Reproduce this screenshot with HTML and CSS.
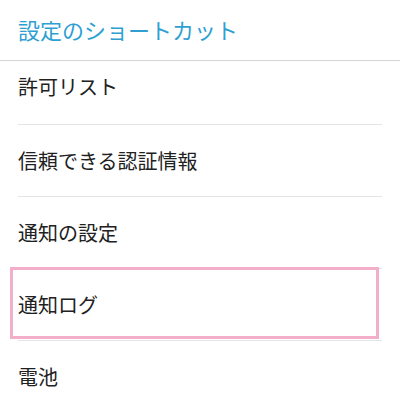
FILE: index.html
```html
<!DOCTYPE html>
<html lang="ja">
<head>
<meta charset="utf-8">
<link rel="stylesheet" href="styles.css">
</head>
<body>
<div class="screen">
  <div class="header">設定のショートカット</div>
  <div class="item item-first">許可リスト</div>
  <div class="item">信頼できる認証情報</div>
  <div class="item">通知の設定</div>
  <div class="item">通知ログ</div>
  <div class="item">電池</div>
  <div class="highlight"></div>
</div>
</body>
</html>
```
FILE: styles.css
```css
* { box-sizing: border-box; }
html, body {
  margin: 0;
  padding: 0;
  background: #ffffff;
}
.screen {
  position: relative;
  width: 400px;
  height: 409px;
  overflow: hidden;
  font-family: "Noto Sans CJK JP", "Noto Sans", sans-serif;
}
.header {
  height: 61px;
  padding: 18px 0 0 18px;
  font-size: 22px;
  line-height: 22px;
  color: #2f9fd2;
  border-bottom: 1px solid #d4d4d4;
}
.item {
  display: flex;
  align-items: center;
  height: 72px;
  margin: 0 18px;
  font-size: 20px;
  line-height: 20px;
  color: #212121;
  border-bottom: 1px solid #e4e4e4;
}
.item-first {
  height: 64px;
  align-items: flex-start;
  padding-top: 16px;
}
.highlight {
  position: absolute;
  left: 10px;
  top: 267px;
  width: 369px;
  height: 72px;
  border: 3px solid #f3afc9;
}
```
